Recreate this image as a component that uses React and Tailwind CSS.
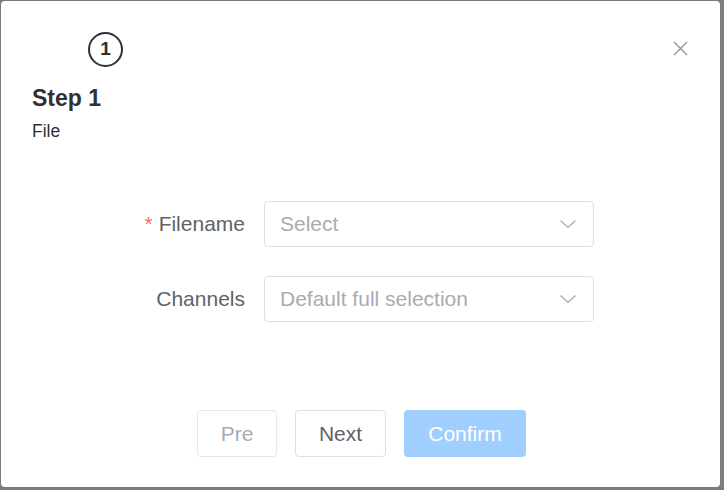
export default function App() {
  return (
    <div
      className="h-[490px] w-[724px] overflow-hidden bg-[#7d7d7d] pl-px pt-px"
      style={{ fontFamily: '"Liberation Sans", Arial, sans-serif' }}
    >
      <div className="relative flex h-[486px] w-[719px] flex-col rounded-[4px] bg-white px-[31px]">
        {/* Close */}
        <button className="absolute right-[32px] top-[40px] h-[15px] w-[15px] text-[#909399]">
          <svg viewBox="0 0 15 15" className="h-[15px] w-[15px]" fill="none" stroke="currentColor" strokeWidth="1.4">
            <path d="M1 1 L14 14 M14 1 L1 14" />
          </svg>
        </button>

        {/* Step */}
        <div className="mt-[31px] ml-[56px] flex h-[35px] w-[35px] items-center justify-center rounded-full border-2 border-[#303133] text-[19px] font-bold text-[#303133]">
          1
        </div>
        <div className="mt-[16px] text-[23px] font-bold leading-[30px] text-[#303133]">Step 1</div>
        <div className="mt-[6px] text-[17.5px] leading-[24px] text-[#303133]">File</div>

        {/* Form */}
        <div className="mt-[58px] flex flex-col gap-[29px]">
          <FormRow label="Filename" required placeholder="Select" />
          <FormRow label="Channels" placeholder="Default full selection" />
        </div>

        {/* Footer */}
        <div className="mt-[88px] flex justify-center gap-[18px] pl-[2px]">
          <button className="h-[47px] w-[80px] rounded-[4px] border border-[#e4e7ed] bg-white text-[21px] text-[#a8abb2]">
            Pre
          </button>
          <button className="h-[47px] w-[91px] rounded-[4px] border border-[#dcdfe6] bg-white text-[21px] text-[#606266]">
            Next
          </button>
          <button className="h-[47px] w-[122px] rounded-[4px] bg-[#a0cfff] text-[21px] text-white">
            Confirm
          </button>
        </div>
      </div>
    </div>
  );
}

function FormRow({ label, required, placeholder }) {
  return (
    <div className="flex items-center">
      <div className="w-[232px] pr-[19px] text-right text-[21px] text-[#606266]">
        {required && <span className="mr-[6px] text-[#f56c6c]">*</span>}
        {label}
      </div>
      <div className="flex h-[46px] w-[330px] items-center justify-between rounded-[4px] border border-[#dcdfe6] pl-[15px] pr-[17px]">
        <span className="text-[21px] text-[#a8abb2]">{placeholder}</span>
        <svg viewBox="0 0 16 8" className="h-[8px] w-[16px]" fill="none" stroke="#a8abb2" strokeWidth="1.3">
          <path d="M0.5 0.5 L8 7.5 L15.5 0.5" />
        </svg>
      </div>
    </div>
  );
}
